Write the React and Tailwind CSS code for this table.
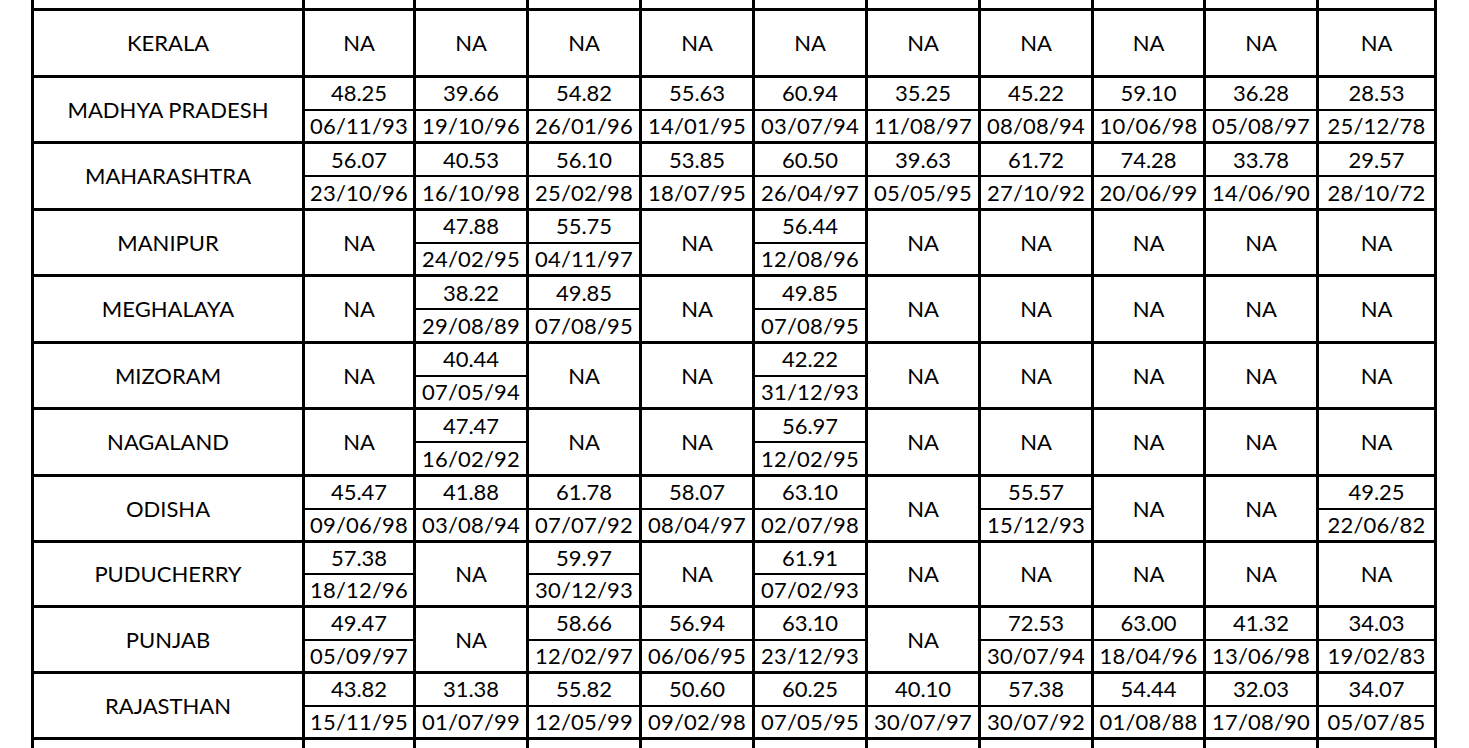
const COLS = [
  "w-[111px]",
  "w-[113px]",
  "w-[113px]",
  "w-[113px]",
  "w-[113px]",
  "w-[113px]",
  "w-[113px]",
  "w-[112px]",
  "w-[113px]",
  "w-[118px]",
];

const HEIGHTS = [
  "h-[67px]",
  "h-[66px]",
  "h-[67px]",
  "h-[66px]",
  "h-[67px]",
  "h-[66px]",
  "h-[67px]",
  "h-[66px]",
  "h-[65px]",
  "h-[66px]",
  "h-[66px]",
];

const NA = null;

const rows = [
  { state: "KERALA", cells: [NA, NA, NA, NA, NA, NA, NA, NA, NA, NA] },
  {
    state: "MADHYA PRADESH",
    cells: [
      ["48.25", "06/11/93"],
      ["39.66", "19/10/96"],
      ["54.82", "26/01/96"],
      ["55.63", "14/01/95"],
      ["60.94", "03/07/94"],
      ["35.25", "11/08/97"],
      ["45.22", "08/08/94"],
      ["59.10", "10/06/98"],
      ["36.28", "05/08/97"],
      ["28.53", "25/12/78"],
    ],
  },
  {
    state: "MAHARASHTRA",
    cells: [
      ["56.07", "23/10/96"],
      ["40.53", "16/10/98"],
      ["56.10", "25/02/98"],
      ["53.85", "18/07/95"],
      ["60.50", "26/04/97"],
      ["39.63", "05/05/95"],
      ["61.72", "27/10/92"],
      ["74.28", "20/06/99"],
      ["33.78", "14/06/90"],
      ["29.57", "28/10/72"],
    ],
  },
  {
    state: "MANIPUR",
    cells: [
      NA,
      ["47.88", "24/02/95"],
      ["55.75", "04/11/97"],
      NA,
      ["56.44", "12/08/96"],
      NA,
      NA,
      NA,
      NA,
      NA,
    ],
  },
  {
    state: "MEGHALAYA",
    cells: [
      NA,
      ["38.22", "29/08/89"],
      ["49.85", "07/08/95"],
      NA,
      ["49.85", "07/08/95"],
      NA,
      NA,
      NA,
      NA,
      NA,
    ],
  },
  {
    state: "MIZORAM",
    cells: [
      NA,
      ["40.44", "07/05/94"],
      NA,
      NA,
      ["42.22", "31/12/93"],
      NA,
      NA,
      NA,
      NA,
      NA,
    ],
  },
  {
    state: "NAGALAND",
    cells: [
      NA,
      ["47.47", "16/02/92"],
      NA,
      NA,
      ["56.97", "12/02/95"],
      NA,
      NA,
      NA,
      NA,
      NA,
    ],
  },
  {
    state: "ODISHA",
    cells: [
      ["45.47", "09/06/98"],
      ["41.88", "03/08/94"],
      ["61.78", "07/07/92"],
      ["58.07", "08/04/97"],
      ["63.10", "02/07/98"],
      NA,
      ["55.57", "15/12/93"],
      NA,
      NA,
      ["49.25", "22/06/82"],
    ],
  },
  {
    state: "PUDUCHERRY",
    cells: [
      ["57.38", "18/12/96"],
      NA,
      ["59.97", "30/12/93"],
      NA,
      ["61.91", "07/02/93"],
      NA,
      NA,
      NA,
      NA,
      NA,
    ],
  },
  {
    state: "PUNJAB",
    cells: [
      ["49.47", "05/09/97"],
      NA,
      ["58.66", "12/02/97"],
      ["56.94", "06/06/95"],
      ["63.10", "23/12/93"],
      NA,
      ["72.53", "30/07/94"],
      ["63.00", "18/04/96"],
      ["41.32", "13/06/98"],
      ["34.03", "19/02/83"],
    ],
  },
  {
    state: "RAJASTHAN",
    cells: [
      ["43.82", "15/11/95"],
      ["31.38", "01/07/99"],
      ["55.82", "12/05/99"],
      ["50.60", "09/02/98"],
      ["60.25", "07/05/95"],
      ["40.10", "30/07/97"],
      ["57.38", "30/07/92"],
      ["54.44", "01/08/88"],
      ["32.03", "17/08/90"],
      ["34.07", "05/07/85"],
    ],
  },
];

const Cell = ({ width, value }) => {
  if (!value) {
    return (
      <div
        className={`${width} shrink-0 border-r-[3px] border-black flex items-center justify-center`}
      >
        NA
      </div>
    );
  }
  return (
    <div className={`${width} shrink-0 border-r-[3px] border-black flex flex-col`}>
      <div className="flex-1 border-b-2 border-black flex items-center justify-center">
        {value[0]}
      </div>
      <div className="flex-1 flex items-center justify-center tracking-[0.2px]">
        {value[1]}
      </div>
    </div>
  );
};

const EmptyRow = ({ className }) => (
  <div className={`flex ${className}`}>
    <div className="w-[271px] shrink-0 border-r-[3px] border-black" />
    {COLS.map((w, i) => (
      <div key={i} className={`${w} shrink-0 border-r-[3px] border-black`} />
    ))}
  </div>
);

export default function App() {
  return (
    <div
      className="h-[748px] w-[1469px] overflow-hidden bg-white text-black text-[22px] leading-none"
      style={{ fontFamily: "Lato, 'Open Sans', sans-serif" }}
    >
      <div className="ml-[31px] w-[1406px] border-l-[3px] border-black">
        <EmptyRow className="h-[8px]" />
        {rows.map((row, r) => (
          <div
            key={row.state}
            className={`flex border-t-[3px] border-black ${HEIGHTS[r]}`}
          >
            <div className="w-[271px] shrink-0 border-r-[3px] border-black flex items-center justify-center">
              {row.state}
            </div>
            {row.cells.map((c, i) => (
              <Cell key={i} width={COLS[i]} value={c} />
            ))}
          </div>
        ))}
        <EmptyRow className="h-[11px] border-t-[3px] border-black" />
      </div>
    </div>
  );
}
